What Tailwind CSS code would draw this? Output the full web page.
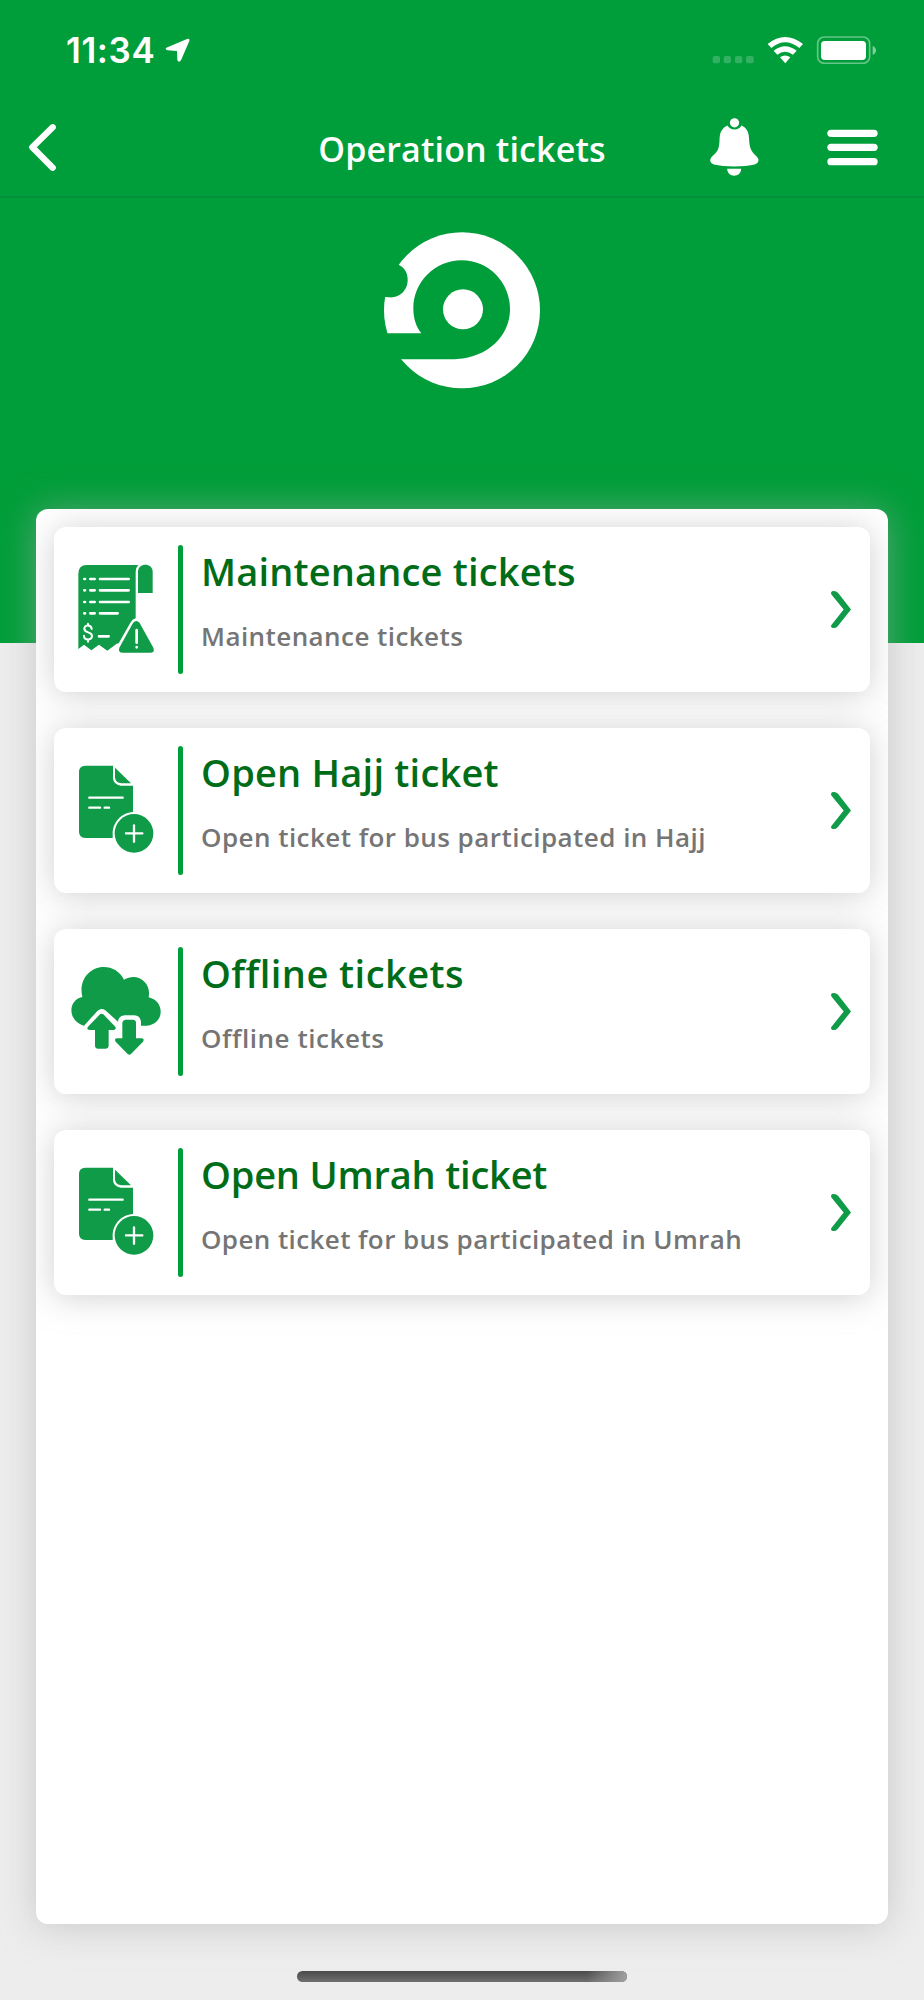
<!DOCTYPE html>
<html lang="en">
<head>
    <meta charset="UTF-8">
    <meta name="viewport" content="width=device-width, initial-scale=1.0">
    <title>Operation tickets</title>
    <script src="https://cdn.jsdelivr.net/npm/@tailwindcss/browser@4"></script>
</head>
<body class="bg-[#ededed] w-[924px] h-[2000px] overflow-hidden font-['Open_Sans',sans-serif]">
    <header class="bg-[#009e3a] h-[643px] text-white">
        <!-- Status bar -->
        <div class="h-[100px] flex items-center justify-between pl-[66px] pr-[47px]">
            <div class="flex items-center gap-[10px]">
                <span class="font-['Inter',sans-serif] font-semibold text-[35px] leading-none tracking-[0.6px] pt-px">11:34</span>
                <svg class="w-[25px] h-[25px]" viewBox="494 115 75 75" fill="currentColor">
                    <path d="M498 144L560 118Q569 115 567 124L542 182Q536 190 531 182L530 154L501 152Q493 149 498 144Z"/>
                </svg>
            </div>
            <svg class="w-[165px] h-[28px]" viewBox="750 108 495 84" fill="currentColor">
                <g opacity=".2">
                    <rect x="752" y="168" width="22" height="22" rx="6"/>
                    <rect x="785" y="168" width="22" height="22" rx="6"/>
                    <rect x="819" y="168" width="22" height="22" rx="6"/>
                    <rect x="852" y="168" width="23" height="22" rx="6"/>
                </g>
                <path d="M917 132Q969 90 1023 132L1012 144Q969 109 928 144Z"/>
                <path d="M935 152Q969 125 1004 152L993 164Q969 146 946 164Z"/>
                <path d="M954 172Q969 161 985 172L970 190Z"/>
                <rect x="1067" y="111" width="156" height="79" rx="20" fill="none" stroke="currentColor" stroke-width="5" opacity=".4"/>
                <rect x="1077" y="123" width="135" height="57" rx="11"/>
                <path d="M1232 137Q1242 142 1242 151T1232 165Z" opacity=".5"/>
            </svg>
        </div>

        <!-- Navigation bar -->
        <nav class="h-[98px] border-b-2 border-[#058f38] grid grid-cols-[1fr_auto_1fr] items-center pl-[28px] pr-[46px] pb-[2px]">
            <svg class="w-[29px] h-[49px]" viewBox="84 370 87 147" fill="none" stroke="currentColor" stroke-width="19" stroke-linecap="round" stroke-linejoin="round">
                <path d="M158 383L97 443L158 504"/>
            </svg>
            <h1 class="w-[288px] ml-[18px] pt-[4px] text-center whitespace-nowrap font-semibold text-[34px] leading-none tracking-[0.15px]">Operation tickets</h1>
            <div class="flex items-center justify-end gap-[67px]">
                <svg class="w-[51px] h-[60px]" viewBox="740 350 154 180" fill="currentColor">
                    <circle cx="817" cy="367" r="14"/>
                    <path d="M796 375C780 382 773 394 772 415C771 446 767 453 750 468C740 478 742 488 755 493C785 501 848 501 878 493C891 488 893 478 884 469C866 452 862 442 861 415C860 394 854 382 838 375C830 391 804 391 796 375Z"/>
                    <path d="M795 506H837C837 534 795 534 795 506Z"/>
                </svg>
                <svg class="w-[51px] h-[37px]" viewBox="1095 385 153 111" fill="currentColor">
                    <rect x="1096" y="387" width="151" height="22" rx="11"/>
                    <rect x="1096" y="429" width="151" height="22" rx="11"/>
                    <rect x="1096" y="472" width="151" height="22" rx="11"/>
                </svg>
            </div>
        </nav>

        <!-- Logo -->
        <svg class="w-[160px] h-[160px] mt-[32px] mx-auto" viewBox="66 45 480 480">
            <circle cx="306" cy="286" r="234" fill="#fff"/>
            <path fill="#009e3a" d="M60 355H184C168 335 160 309 160 281C160 201 225 136 305 136C385 136 450 201 450 283C450 365 381 427 292 432Q270 434 60 432Z"/>
            <circle cx="309" cy="283" r="60" fill="#fff"/>
            <path fill="#009e3a" d="M60 130L117 150C137 160 144 178 143 199C141 230 114 251 86 247L60 245Z"/>
        </svg>
    </header>

    <!-- Ticket list -->
    <main class="-mt-[134px] mx-[36px] h-[1415px] bg-white rounded-[12px] shadow-[0_2px_36px_rgba(170,170,170,0.55)] relative">
        <div class="flex flex-col gap-[36px] px-[18px] pt-[18px] h-full overflow-hidden rounded-[12px]">
            <a class="h-[165px] shrink-0 flex items-center bg-white rounded-[12px] shadow-[0_2px_32px_rgba(170,170,170,0.55)] pr-[18px]">
                <svg class="w-[124px] h-[165px]" viewBox="72 111 372 495" fill="#0f9b48">
                    <path d="M145 477V252Q145 225 170 225H325Q317 233 317 245V385Q308 387 302 397L266 460L260 461L232 482L207 464L184 481L162 464Z"/>
                    <path d="M324 309V245C324 217 368 217 368 245V309Z"/>
                    <path d="M309 399Q319 387 329 399L370 473Q376 488 360 488H279Q263 488 268 473Z"/>
                    <g stroke="#fff" stroke-width="8" stroke-linecap="round" fill="none">
                        <path d="M163 267h2M181 267h13M210 267h86M163 301h2M181 301h13M210 301h86M163 336h2M181 336h13M210 336h86M163 370h2M181 370h13M210 370h53M207 439h29"/>
                        <path d="M185 417C184 403 163 403 163 416C163 431 186 423 186 438C186 452 162 452 162 437M174 401V406M174 449V455" stroke-width="6"/>
                        <path d="M320 420V458M320 471v1"/>
                    </g>
                </svg>
                <div class="w-[5px] h-[129px] rounded-full bg-[#009e3a]"></div>
                <div class="flex-1 pl-[18px] pb-[13px] whitespace-nowrap">
                    <h2 class="mb-[5px] text-[#006c18] font-semibold text-[38px] leading-[60px] tracking-[0.17px]">Maintenance tickets</h2>
                    <p class="text-[#757575] font-semibold text-[26px] leading-[60px] tracking-[0.43px]">Maintenance tickets</p>
                </div>
                <svg class="w-[22px] h-[39px]" viewBox="390 330 66 116" fill="#0f9b48">
                    <path d="M396 333Q407 330 414 338L453 388L413 438Q406 446 396 443Q390 438 396 432L431 388L396 345Q390 338 396 333Z"/>
                </svg>
            </a>

            <a class="h-[165px] shrink-0 flex items-center bg-white rounded-[12px] shadow-[0_2px_32px_rgba(170,170,170,0.55)] pr-[18px]">
                <svg class="w-[124px] h-[165px]" viewBox="72 39 372 495" fill="#0f9b48">
                    <path d="M166 152H249V190Q251 210 272 212H309V291C275 293 248 321 248 357V369H166Q147 368 147 350V170Q147 153 166 152Z"/>
                    <path d="M255 158L303 205H275Q256 204 255 187Z"/>
                    <circle cx="312" cy="355" r="58"/>
                    <path d="M178 248H278M178 278H210M224 278H237M288 355H337M312 331V380" stroke="#fff" stroke-width="7" stroke-linecap="round"/>
                </svg>
                <div class="w-[5px] h-[129px] rounded-full bg-[#009e3a]"></div>
                <div class="flex-1 pl-[18px] pb-[13px] whitespace-nowrap">
                    <h2 class="mb-[5px] text-[#006c18] font-semibold text-[38px] leading-[60px] tracking-[0.22px]">Open Hajj ticket</h2>
                    <p class="text-[#757575] font-semibold text-[26px] leading-[60px] tracking-[0.45px]">Open ticket for bus participated in Hajj</p>
                </div>
                <svg class="w-[22px] h-[39px]" viewBox="390 330 66 116" fill="#0f9b48">
                    <path d="M396 333Q407 330 414 338L453 388L413 438Q406 446 396 443Q390 438 396 432L431 388L396 345Q390 338 396 333Z"/>
                </svg>
            </a>

            <a class="h-[165px] shrink-0 flex items-center bg-white rounded-[12px] shadow-[0_2px_32px_rgba(170,170,170,0.55)] pr-[18px]">
                <svg class="w-[124px] h-[165px]" viewBox="72 25 372 495" fill="#0f9b48">
                    <path d="M162 315C113 302 112 238 157 229C145 180 178 139 221 139C248 139 270 153 282 177C322 153 365 185 356 230C379 236 392 252 392 273C392 300 369 319 333 315V304Q331 284 312 284H284Q266 285 264 303L226 269Q214 261 203 270Z"/>
                    <path d="M210 281Q215 277 220 281L256 318Q260 327 252 328H236V375Q235 384 226 384H204Q195 383 195 375V328H179Q168 327 174 318Z"/>
                    <path d="M286 297H309Q318 298 318 306V353H334Q345 354 339 363L303 400Q298 404 293 400L257 363Q251 354 262 353H277V306Q278 298 286 297Z"/>
                </svg>
                <div class="w-[5px] h-[129px] rounded-full bg-[#009e3a]"></div>
                <div class="flex-1 pl-[18px] pb-[13px] whitespace-nowrap">
                    <h2 class="mb-[5px] text-[#006c18] font-semibold text-[38px] leading-[60px] tracking-[0.45px]">Offline tickets</h2>
                    <p class="text-[#757575] font-semibold text-[26px] leading-[60px] tracking-[0.55px]">Offline tickets</p>
                </div>
                <svg class="w-[22px] h-[39px]" viewBox="390 330 66 116" fill="#0f9b48">
                    <path d="M396 333Q407 330 414 338L453 388L413 438Q406 446 396 443Q390 438 396 432L431 388L396 345Q390 338 396 333Z"/>
                </svg>
            </a>

            <a class="h-[165px] shrink-0 flex items-center bg-white rounded-[12px] shadow-[0_2px_32px_rgba(170,170,170,0.55)] pr-[18px]">
                <svg class="w-[124px] h-[165px]" viewBox="72 39 372 495" fill="#0f9b48">
                    <path d="M166 152H249V190Q251 210 272 212H309V291C275 293 248 321 248 357V369H166Q147 368 147 350V170Q147 153 166 152Z"/>
                    <path d="M255 158L303 205H275Q256 204 255 187Z"/>
                    <circle cx="312" cy="355" r="58"/>
                    <path d="M178 248H278M178 278H210M224 278H237M288 355H337M312 331V380" stroke="#fff" stroke-width="7" stroke-linecap="round"/>
                </svg>
                <div class="w-[5px] h-[129px] rounded-full bg-[#009e3a]"></div>
                <div class="flex-1 pl-[18px] pb-[13px] whitespace-nowrap">
                    <h2 class="mb-[5px] text-[#006c18] font-semibold text-[38px] leading-[60px] tracking-[-0.2px]">Open Umrah ticket</h2>
                    <p class="text-[#757575] font-semibold text-[26px] leading-[60px] tracking-[0.4px]">Open ticket for bus participated in Umrah</p>
                </div>
                <svg class="w-[22px] h-[39px]" viewBox="390 330 66 116" fill="#0f9b48">
                    <path d="M396 333Q407 330 414 338L453 388L413 438Q406 446 396 443Q390 438 396 432L431 388L396 345Q390 338 396 333Z"/>
                </svg>
            </a>
        </div>
    </main>

    <!-- Home indicator -->
    <div class="mt-[47px] mx-auto w-[330px] h-[11px] rounded-full overflow-hidden bg-linear-to-b from-[#4b4b4b] to-[#707070] flex justify-end">
        <div class="w-[40px] h-full bg-linear-to-r from-transparent to-[#a0a0a0]"></div>
    </div>
</body>
</html>
